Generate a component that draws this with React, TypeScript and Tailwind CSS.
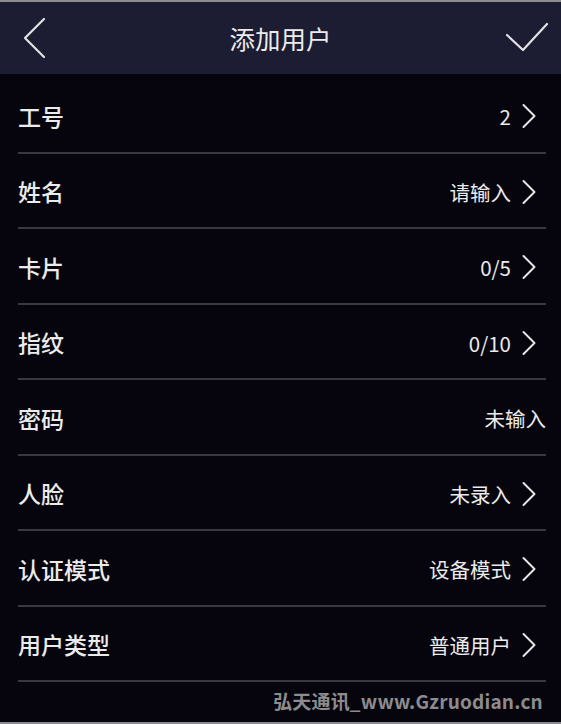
import React from "react";

type Row = {
  label: string;
  value: string;
  arrow: boolean;
};

const rows: Row[] = [
  { label: "工号", value: "2", arrow: true },
  { label: "姓名", value: "请输入", arrow: true },
  { label: "卡片", value: "0/5", arrow: true },
  { label: "指纹", value: "0/10", arrow: true },
  { label: "密码", value: "未输入", arrow: false },
  { label: "人脸", value: "未录入", arrow: true },
  { label: "认证模式", value: "设备模式", arrow: true },
  { label: "用户类型", value: "普通用户", arrow: true },
];

const font = { fontFamily: '"Noto Sans CJK SC", "Noto Sans", sans-serif' };

const Chevron = () => (
  <svg width="14" height="26" viewBox="0 0 14 26" className="ml-[11px] shrink-0">
    <path d="M1.5 2 L12.5 13 L1.5 24" fill="none" stroke="#e6e6e6" strokeWidth="2" strokeLinecap="round" strokeLinejoin="round" />
  </svg>
);

export default function App() {
  return (
    <div
      className="w-[561px] h-[724px] overflow-hidden bg-[#06050d] border-t-2 border-b-2 border-[#8b8b90] flex flex-col text-[#ebebeb]"
      style={font}
    >
      <header className="h-[72px] shrink-0 bg-[#1c1c32] flex items-center justify-between px-[22px] relative">
        <svg width="26" height="42" viewBox="0 0 26 42">
          <path d="M22 2 L3 21 L22 40" fill="none" stroke="#e2e2e6" strokeWidth="2.2" strokeLinecap="round" strokeLinejoin="round" />
        </svg>
        <h1 className="absolute left-0 right-0 text-center text-[25.5px] leading-none pointer-events-none">添加用户</h1>
        <svg width="44" height="32" viewBox="0 0 44 32" className="mr-[-10px]">
          <path d="M2 13 L18 28 L42 2" fill="none" stroke="#e2e2e6" strokeWidth="2.2" strokeLinecap="round" strokeLinejoin="round" />
        </svg>
      </header>

      <div className="ml-[18px] mr-[15px] mt-[4px] flex flex-col">
        {rows.map((r) => (
          <div key={r.label} className="flex flex-col">
            <div className="h-[73.5px] flex items-center justify-between pt-[3px]">
              <span className="text-[23px] font-medium leading-none">{r.label}</span>
              <div className={`flex items-center ${r.arrow ? "pr-[10px]" : "pr-0"}`}>
                <span className="text-[20.5px] leading-none">{r.value}</span>
                {r.arrow && <Chevron />}
              </div>
            </div>
            <div className="h-[2px] bg-[#38383e]" />
          </div>
        ))}
      </div>

      <div className="flex-1 flex items-center justify-end pr-[18px] pb-[4px]">
        <span className="text-[19px] font-semibold text-[#8c8c8e] leading-none tracking-[0.2px]">
          弘天通讯_www.Gzruodian.cn
        </span>
      </div>
    </div>
  );
}
